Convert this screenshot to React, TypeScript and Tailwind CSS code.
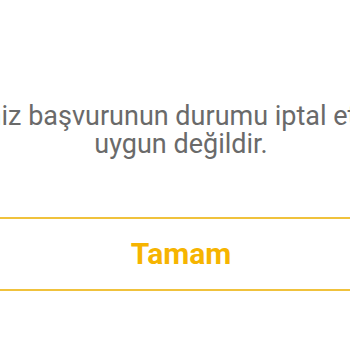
export default function App() {
  return (
    <div
      className="w-[350px] h-[350px] overflow-hidden bg-white flex flex-col"
      style={{ fontFamily: "Roboto, 'Noto Sans', sans-serif" }}
    >
      <div className="pt-[102px] pl-[12px] flex flex-col items-center text-[27px] leading-[28px] text-[#6a6a6a]">
        <div className="whitespace-nowrap">Seçtiğiniz başvurunun durumu iptal etmek için</div>
        <div className="whitespace-nowrap">uygun değildir.</div>
      </div>
      <div className="mt-[59px] h-[2px] w-full bg-[#f0c23c]" />
      <div className="h-[70px] pl-[12px] flex items-center justify-center">
        <span className="text-[30px] leading-[36px] font-bold text-[#f6b400]">Tamam</span>
      </div>
      <div className="h-[2px] w-full bg-[#f0c23c]" />
    </div>
  );
}
